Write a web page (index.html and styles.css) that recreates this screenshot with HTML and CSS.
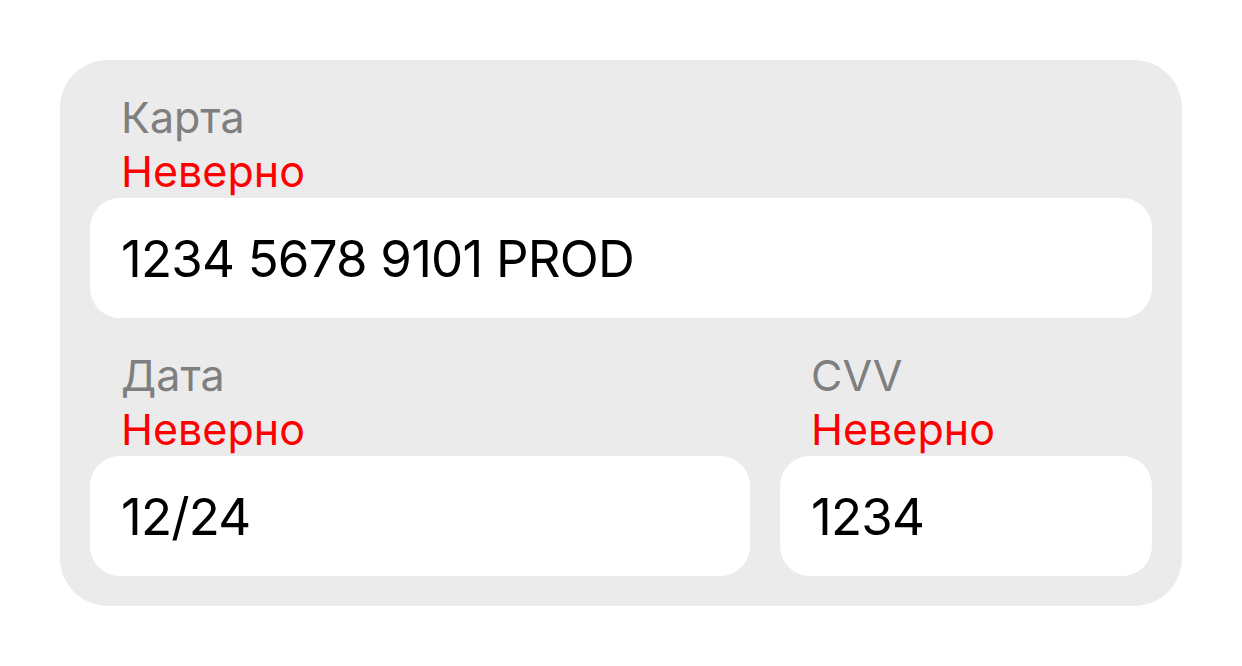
FILE: index.html
```html
<!DOCTYPE html>
<html lang="ru">
<head>
<meta charset="utf-8">
<link rel="stylesheet" href="styles.css">
</head>
<body>
<div class="card">
  <div class="field">
    <div class="label">Карта</div>
    <div class="error">Неверно</div>
    <div class="input">1234 5678 9101 PROD</div>
  </div>
  <div class="row">
    <div class="field">
      <div class="label">Дата</div>
      <div class="error">Неверно</div>
      <div class="input">12/24</div>
    </div>
    <div class="field">
      <div class="label">CVV</div>
      <div class="error">Неверно</div>
      <div class="input">1234</div>
    </div>
  </div>
</div>
</body>
</html>
```
FILE: styles.css
```css
html, body {
  margin: 0;
  padding: 0;
  background: #ffffff;
}
body {
  font-family: Inter, "Noto Sans", sans-serif;
}
.card {
  box-sizing: border-box;
  margin: 60px;
  width: 1122px;
  height: 546px;
  padding: 30px;
  background: #ebebeb;
  border-radius: 48px;
  display: flex;
  flex-direction: column;
  gap: 30px;
}
.row {
  display: grid;
  grid-template-columns: 1fr 372px;
  gap: 30px;
}
.label, .error {
  padding-left: 31px;
  font-size: 43px;
  line-height: 54px;
  height: 54px;
  white-space: nowrap;
}
.label {
  color: #7f7f7f;
}
.error {
  color: #ff0000;
}
.input {
  box-sizing: border-box;
  height: 120px;
  background: #ffffff;
  border-radius: 30px;
  padding-left: 31px;
  display: flex;
  align-items: center;
  font-size: 51px;
  letter-spacing: -0.8px;
  color: #000000;
  white-space: nowrap;
}
```
